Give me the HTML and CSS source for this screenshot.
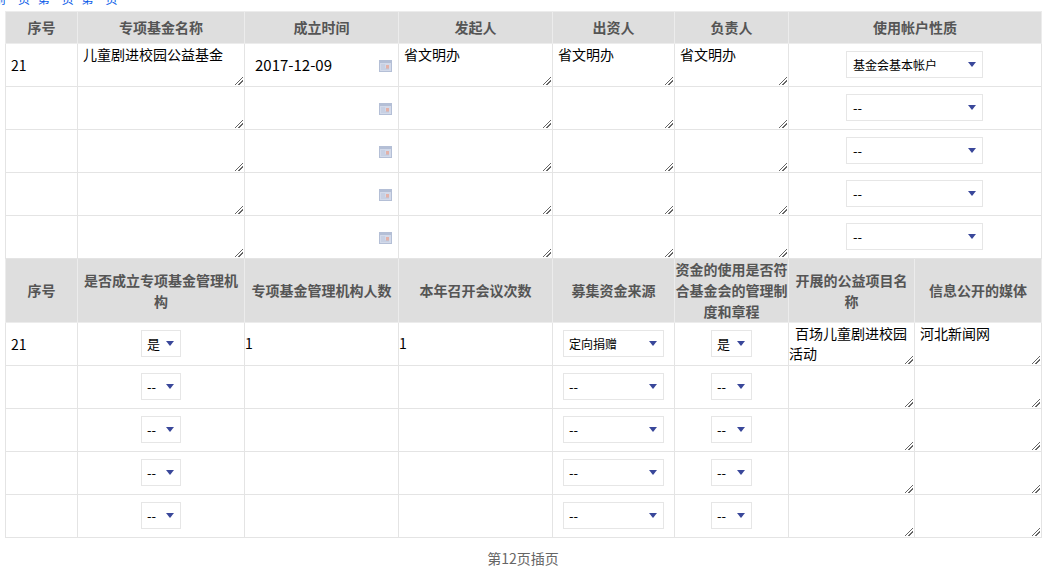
FILE: index.html
```html
<!DOCTYPE html>
<html lang="zh-CN">
<head>
<meta charset="utf-8">
<title>第12页插页</title>
<link rel="stylesheet" href="styles.css">
</head>
<body>
<div class="clip"><div class="links"><a href="#">前一页</a> <a href="#">第一页</a> <a href="#">第一页</a></div></div>
<table class="grid">
<colgroup>
<col class="c1"><col class="c2"><col class="c3"><col class="c4"><col class="c5"><col class="c6"><col class="c7"><col class="c8">
</colgroup>
<tr class="h1"><th>序号</th><th>专项基金名称</th><th>成立时间</th><th>发起人</th><th>出资人</th><th>负责人</th><th colspan="2">使用帐户性质</th></tr>
<tr><td class="num">21</td><td><div class="ta">儿童剧进校园公益基金<i class="grip"></i></div></td><td><div class="date"><span>2017-12-09</span><svg class="cal" viewBox="0 0 13 12"><rect width="13" height="12" fill="#b4bfd6"/><rect x="1" y="3" width="11" height="8" fill="#d3daea"/><rect x="7" y="5" width="3" height="4" fill="#e3b1a8"/><path d="M2 5h4M2 7h4M2 9h8" stroke="#bcc6dc"/></svg></div></td><td><div class="ta">省文明办<i class="grip"></i></div></td><td><div class="ta">省文明办<i class="grip"></i></div></td><td><div class="ta">省文明办<i class="grip"></i></div></td><td colspan="2" class="mid"><div class="sel w136"><span class="small">基金会基本帐户</span><b class="arr"></b></div></td></tr>
<tr><td></td><td><div class="ta"><i class="grip"></i></div></td><td><div class="date"><svg class="cal" viewBox="0 0 13 12"><rect width="13" height="12" fill="#b4bfd6"/><rect x="1" y="3" width="11" height="8" fill="#d3daea"/><rect x="7" y="5" width="3" height="4" fill="#e3b1a8"/><path d="M2 5h4M2 7h4M2 9h8" stroke="#bcc6dc"/></svg></div></td><td><div class="ta"><i class="grip"></i></div></td><td><div class="ta"><i class="grip"></i></div></td><td><div class="ta"><i class="grip"></i></div></td><td colspan="2" class="mid"><div class="sel w136"><span>--</span><b class="arr"></b></div></td></tr>
<tr><td></td><td><div class="ta"><i class="grip"></i></div></td><td><div class="date"><svg class="cal" viewBox="0 0 13 12"><rect width="13" height="12" fill="#b4bfd6"/><rect x="1" y="3" width="11" height="8" fill="#d3daea"/><rect x="7" y="5" width="3" height="4" fill="#e3b1a8"/><path d="M2 5h4M2 7h4M2 9h8" stroke="#bcc6dc"/></svg></div></td><td><div class="ta"><i class="grip"></i></div></td><td><div class="ta"><i class="grip"></i></div></td><td><div class="ta"><i class="grip"></i></div></td><td colspan="2" class="mid"><div class="sel w136"><span>--</span><b class="arr"></b></div></td></tr>
<tr><td></td><td><div class="ta"><i class="grip"></i></div></td><td><div class="date"><svg class="cal" viewBox="0 0 13 12"><rect width="13" height="12" fill="#b4bfd6"/><rect x="1" y="3" width="11" height="8" fill="#d3daea"/><rect x="7" y="5" width="3" height="4" fill="#e3b1a8"/><path d="M2 5h4M2 7h4M2 9h8" stroke="#bcc6dc"/></svg></div></td><td><div class="ta"><i class="grip"></i></div></td><td><div class="ta"><i class="grip"></i></div></td><td><div class="ta"><i class="grip"></i></div></td><td colspan="2" class="mid"><div class="sel w136"><span>--</span><b class="arr"></b></div></td></tr>
<tr><td></td><td><div class="ta"><i class="grip"></i></div></td><td><div class="date"><svg class="cal" viewBox="0 0 13 12"><rect width="13" height="12" fill="#b4bfd6"/><rect x="1" y="3" width="11" height="8" fill="#d3daea"/><rect x="7" y="5" width="3" height="4" fill="#e3b1a8"/><path d="M2 5h4M2 7h4M2 9h8" stroke="#bcc6dc"/></svg></div></td><td><div class="ta"><i class="grip"></i></div></td><td><div class="ta"><i class="grip"></i></div></td><td><div class="ta"><i class="grip"></i></div></td><td colspan="2" class="mid"><div class="sel w136"><span>--</span><b class="arr"></b></div></td></tr>
<tr class="h2"><th>序号</th><th>是否成立专项基金管理机构</th><th>专项基金管理机构人数</th><th>本年召开会议次数</th><th>募集资金来源</th><th>资金的使用是否符合基金会的管理制度和章程</th><th>开展的公益项目名称</th><th>信息公开的媒体</th></tr>
<tr><td class="num">21</td><td class="mid"><div class="sel w40"><span>是</span><b class="arr"></b></div></td><td class="val">1</td><td class="val">1</td><td class="mid"><div class="sel w101"><span class="small">定向捐赠</span><b class="arr"></b></div></td><td class="mid"><div class="sel w41"><span>是</span><b class="arr"></b></div></td><td><div class="ta flush"><span class="ind">百场儿童剧进校园</span>活动<i class="grip"></i></div></td><td><div class="ta">河北新闻网<i class="grip"></i></div></td></tr>
<tr><td></td><td class="mid"><div class="sel w40"><span>--</span><b class="arr"></b></div></td><td></td><td></td><td class="mid"><div class="sel w101"><span>--</span><b class="arr"></b></div></td><td class="mid"><div class="sel w41"><span>--</span><b class="arr"></b></div></td><td><div class="ta"><i class="grip"></i></div></td><td><div class="ta"><i class="grip"></i></div></td></tr>
<tr><td></td><td class="mid"><div class="sel w40"><span>--</span><b class="arr"></b></div></td><td></td><td></td><td class="mid"><div class="sel w101"><span>--</span><b class="arr"></b></div></td><td class="mid"><div class="sel w41"><span>--</span><b class="arr"></b></div></td><td><div class="ta"><i class="grip"></i></div></td><td><div class="ta"><i class="grip"></i></div></td></tr>
<tr><td></td><td class="mid"><div class="sel w40"><span>--</span><b class="arr"></b></div></td><td></td><td></td><td class="mid"><div class="sel w101"><span>--</span><b class="arr"></b></div></td><td class="mid"><div class="sel w41"><span>--</span><b class="arr"></b></div></td><td><div class="ta"><i class="grip"></i></div></td><td><div class="ta"><i class="grip"></i></div></td></tr>
<tr><td></td><td class="mid"><div class="sel w40"><span>--</span><b class="arr"></b></div></td><td></td><td></td><td class="mid"><div class="sel w101"><span>--</span><b class="arr"></b></div></td><td class="mid"><div class="sel w41"><span>--</span><b class="arr"></b></div></td><td><div class="ta"><i class="grip"></i></div></td><td><div class="ta"><i class="grip"></i></div></td></tr>
</table>
<p class="page">第12页插页</p>
</body>
</html>
```
FILE: styles.css
```css
* { box-sizing: border-box; }
html, body { margin: 0; padding: 0; height: 576px; overflow: hidden; background: #fff; }
body { font-family: "Noto Sans CJK SC", "Liberation Sans", sans-serif; font-size: 14px; color: #000; }
.clip { height: 11px; overflow: hidden; }
.links { margin: -10px 0 0 -6px; line-height: 18px; font-size: 12px; white-space: nowrap; }
.links a { color: #0a5ce8; text-decoration: none; margin-right: 5px; }
.grid { margin-left: 5px; width: 1036px; table-layout: fixed; border-collapse: collapse; }
.c1 { width: 72px; } .c2 { width: 167px; } .c3 { width: 154px; } .c4 { width: 154px; }
.c5 { width: 122px; } .c6 { width: 114px; } .c7 { width: 126px; } .c8 { width: 127px; }
th, td { border: 1px solid #e4e4e4; padding: 0; height: 43px; }
th { background: #dedede; color: #555; font-weight: bold; font-size: 14px; line-height: 21px; text-align: center; border-color: #ececec; }
.h1 th { height: 32px; }
.h2 th { height: 64px; }
td { vertical-align: top; }
.num { padding: 12px 0 0 5px; line-height: 18px; }
.val { line-height: 18px; padding-top: 11px; }
.mid { vertical-align: middle; text-align: center; }
.ta { position: relative; height: 42px; padding: 0 5px; line-height: 20px; text-align: left; }
.flush { padding-left: 0; }
.ind { padding-left: 6px; }
.grip { position: absolute; right: 1px; bottom: 1px; width: 8px; height: 8px; background: linear-gradient(135deg, transparent 0 45%, #666 45% 53%, transparent 53% 68%, #666 68% 76%, transparent 76%); }
.date { position: relative; height: 42px; padding: 11px 0 0 10px; line-height: 20px; font-size: 15px; }
.cal { position: absolute; right: 6px; top: 16px; width: 13px; height: 12px; }
.sel { display: inline-flex; align-items: center; justify-content: space-between; height: 27px; margin-top: -2px; border: 1px solid #e6e6e6; background: #fff; padding: 0 6px 0 5px; vertical-align: middle; text-align: left; font-size: 13px; }
.small { font-size: 12px; }
.w136 { width: 137px; margin-left: -1px; padding-left: 6px; }
.w101 { width: 101px; }
.w40 { width: 40px; }
.w41 { width: 41px; }
.arr { width: 0; height: 0; border-left: 4px solid transparent; border-right: 4px solid transparent; border-top: 5px solid #39479a; margin-top: 1px; }
.page { margin: 11px 0 0; width: 1046px; text-align: center; color: #666; font-size: 14px; line-height: 18px; }
```
